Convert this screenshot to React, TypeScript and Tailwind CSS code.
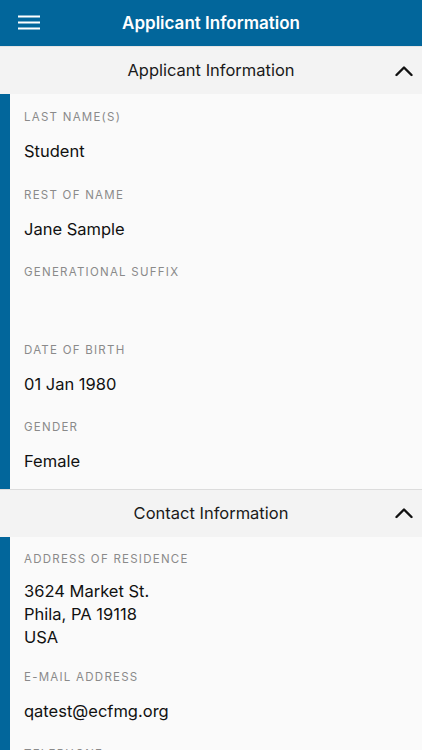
import React from "react";

const font = { fontFamily: "Inter, 'Noto Sans', sans-serif" };

function Field({
  label,
  value,
  pt = "pt-[14px]",
  mt = "mt-[14px]",
  pb = "pb-[8.5px]",
}: {
  label: string;
  value?: string[];
  pt?: string;
  mt?: string;
  pb?: string;
}) {
  return (
    <div className={`${pt} ${pb}`}>
      <div className="text-[11.5px] leading-[18px] tracking-[1.25px] text-[#8a8a8a]">{label}</div>
      <div className={`${mt} min-h-[23px] text-[16.5px] leading-[23px] text-[#111]`}>
        {(value ?? []).map((v, i) => (
          <div key={i}>{v}</div>
        ))}
      </div>
    </div>
  );
}

function SectionHeader({ title }: { title: string }) {
  return (
    <div className="relative flex h-[47px] items-center justify-center bg-[#f3f3f3]">
      <span className="text-[16.5px] text-[#1a1a1a]">{title}</span>
      <svg className="absolute right-[9px] top-1/2 -translate-y-1/2" width="18" height="11" viewBox="0 0 18 11">
        <path d="M1.5 9.5 L9 2 L16.5 9.5" fill="none" stroke="#111" strokeWidth="2.4" strokeLinecap="round" strokeLinejoin="round" />
      </svg>
    </div>
  );
}

export default function App() {
  return (
    <div className="h-[750px] w-[422px] overflow-hidden bg-[#fafafa]" style={font}>
      <div className="relative flex h-[46px] items-center justify-center bg-[#02669b]">
        <svg className="absolute left-[18px] top-[15px]" width="22" height="15" viewBox="0 0 22 15">
          <rect x="0" y="0.5" width="22" height="2" fill="#fff" />
          <rect x="0" y="6.5" width="22" height="2" fill="#fff" />
          <rect x="0" y="12.5" width="22" height="2" fill="#fff" />
        </svg>
        <span className="pt-[2px] text-[17px] font-semibold text-white">Applicant Information</span>
      </div>
      <div className="h-px bg-[#e4e4e4]" />
      <SectionHeader title="Applicant Information" />
      <div className="flex border-b border-[#dcdcdc]">
        <div className="w-[10px] shrink-0 bg-[#02669b]" />
        <div className="flex-1 pl-[14px] pb-[7px]">
          <Field label="LAST NAME(S)" value={["Student"]} />
          <Field label="REST OF NAME" value={["Jane Sample"]} />
          <Field label="GENERATIONAL SUFFIX" />
          <Field label="DATE OF BIRTH" value={["01 Jan 1980"]} />
          <Field label="GENDER" value={["Female"]} />
        </div>
      </div>
      <SectionHeader title="Contact Information" />
      <div className="flex">
        <div className="w-[10px] shrink-0 bg-[#02669b]" />
        <div className="flex-1 pl-[14px]">
          <Field
            label="ADDRESS OF RESIDENCE"
            value={["3624 Market St.", "Phila, PA 19118", "USA"]}
            pt="pt-[13px]"
            mt="mt-[12px]"
            pb="pb-[5px]"
          />
          <Field label="E-MAIL ADDRESS" value={["qatest@ecfmg.org"]} />
          <Field label="TELEPHONE" value={["215-555-1234"]} />
        </div>
      </div>
    </div>
  );
}
